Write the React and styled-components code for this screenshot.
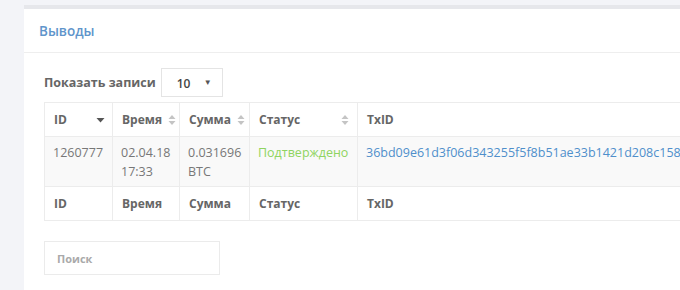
import React from "react";
import styled, { createGlobalStyle } from "styled-components";

const Global = createGlobalStyle`
  html, body {
    margin: 0;
    padding: 0;
    background: #f3f4f8;
    overflow: hidden;
    font-family: "Open Sans", "Noto Sans", sans-serif;
  }
`;

const Page = styled.div`
  padding: 5px 0 0 24px;
  width: 1100px;
`;

const Card = styled.section`
  background: #fff;
  border-top: 4px solid #e6e7eb;
  min-height: 290px;
`;

const CardHeader = styled.div`
  height: 43px;
  display: flex;
  align-items: center;
  padding-left: 15px;
  border-bottom: 1px solid #eeeeee;
`;

const Title = styled.h3`
  margin: 0;
  font-size: 13.5px;
  font-weight: 600;
  color: #5f95cb;
`;

const CardBody = styled.div`
  padding: 15px 20px;
`;

const LengthRow = styled.div`
  display: flex;
  align-items: center;
  gap: 5px;
  margin-bottom: 5px;
`;

const Label = styled.span`
  font-size: 12.5px;
  font-weight: 700;
  color: #666;
`;

const SelectBox = styled.div`
  box-sizing: border-box;
  width: 62px;
  height: 29px;
  border: 1px solid #e4e4e4;
  display: flex;
  align-items: center;
  justify-content: space-between;
  padding: 2px 10px 0 15px;
  font-size: 12px;
  font-weight: 600;
  color: #444;
`;

const Caret = styled.span`
  font-size: 8px;
  color: #555;
  margin-top: -4px;
`;

const Table = styled.table`
  border-collapse: collapse;
  table-layout: fixed;
  width: 900px;
  font-size: 12.5px;
`;

const Th = styled.th`
  position: relative;
  box-sizing: border-box;
  height: 34px;
  padding: 0 9px;
  text-align: left;
  font-weight: 700;
  font-size: 12px;
  color: #666;
  border: 1px solid #ececec;
  white-space: nowrap;
`;

const Row = styled.tr`
  background: ${(p) => (p.$shade ? "#f9f9f9" : "#fff")};
`;

const Td = styled.td`
  padding: 6px 8px 5px;
  vertical-align: top;
  line-height: 19px;
  color: ${(p) => p.$color || "#777"};
  border: 1px solid #ececec;
  white-space: ${(p) => (p.$nowrap ? "nowrap" : "normal")};
`;

const SortIcon = styled.svg`
  position: absolute;
  right: ${(p) => p.$right}px;
  top: 50%;
  transform: translateY(-50%);
`;

const SearchInput = styled.input`
  box-sizing: border-box;
  display: block;
  margin-top: 20px;
  width: 176px;
  height: 34px;
  border: 1px solid #ebebeb;
  padding: 0 12px;
  font-family: inherit;
  font-size: 11px;
  font-weight: 700;
  outline: none;
  &::placeholder {
    color: #aaa;
  }
`;

function Both({ right }) {
  return (
    <SortIcon $right={right} width="8" height="11" viewBox="0 0 8 11">
      <path d="M4 0.5 L7.5 4.5 H0.5 Z" fill="#c4c4c4" />
      <path d="M4 10.5 L7.5 6.5 H0.5 Z" fill="#c4c4c4" />
    </SortIcon>
  );
}

function Desc({ right }) {
  return (
    <SortIcon $right={right} width="9" height="6" viewBox="0 0 9 6">
      <path d="M0.5 1 H8.5 L4.5 5.5 Z" fill="#555" />
    </SortIcon>
  );
}

const cols = [68, 67, 70, 108, 587];

export default function App() {
  return (
    <>
      <Global />
      <Page>
        <Card>
          <CardHeader>
            <Title>Выводы</Title>
          </CardHeader>
          <CardBody>
            <LengthRow>
              <Label>Показать записи</Label>
              <SelectBox>
                10
                <Caret>▼</Caret>
              </SelectBox>
            </LengthRow>
            <Table>
              <colgroup>
                {cols.map((w, i) => (
                  <col key={i} style={{ width: w }} />
                ))}
              </colgroup>
              <thead>
                <tr>
                  <Th>ID<Desc right={7} /></Th>
                  <Th>Время<Both right={3} /></Th>
                  <Th>Сумма<Both right={4} /></Th>
                  <Th>Статус<Both right={8} /></Th>
                  <Th>TxID</Th>
                </tr>
              </thead>
              <tbody>
                <Row $shade>
                  <Td>1260777</Td>
                  <Td>02.04.18 17:33</Td>
                  <Td>0.031696 BTC</Td>
                  <Td $color="#8fd460" $nowrap>Подтверждено</Td>
                  <Td $color="#4f8fcb" $nowrap>
                    36bd09e61d3f06d343255f5f8b51ae33b1421d208c1582b0e5fa8d7c9
                  </Td>
                </Row>
              </tbody>
              <tfoot>
                <tr>
                  <Th>ID</Th>
                  <Th>Время</Th>
                  <Th>Сумма</Th>
                  <Th>Статус</Th>
                  <Th>TxID</Th>
                </tr>
              </tfoot>
            </Table>
            <SearchInput placeholder="Поиск" />
          </CardBody>
        </Card>
      </Page>
    </>
  );
}
